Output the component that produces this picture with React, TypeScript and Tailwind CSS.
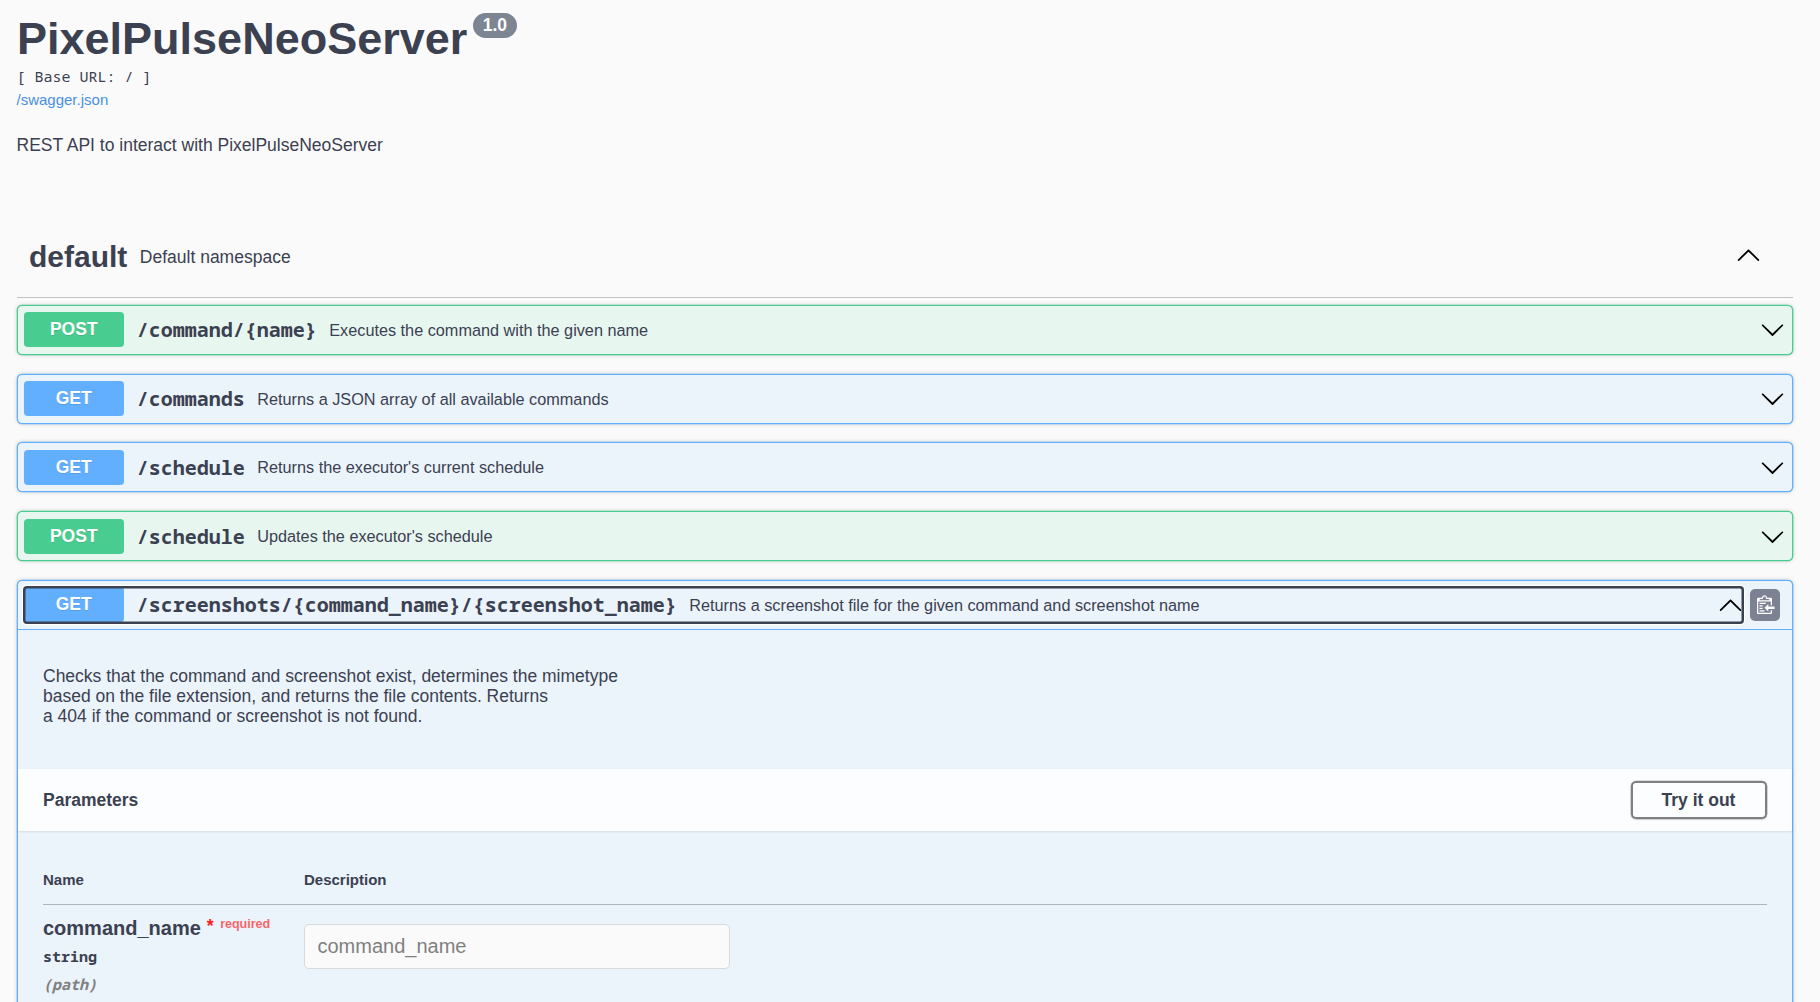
import React from "react";

const ARROW_DOWN =
  "M17.418 6.109c.272-.268.709-.268.979 0s.271.701 0 .969l-7.908 7.83c-.27.268-.707.268-.979 0l-7.908-7.83c-.27-.268-.27-.701 0-.969s.709-.268.979 0L10 13.25z";
const ARROW_UP =
  "M17.418 14.908c.272.268.709.268.979 0s.271-.701 0-.969l-7.908-7.83c-.27-.268-.707-.268-.979 0l-7.908 7.83c-.27.268-.27.701 0 .969s.709.268.979 0L10 7.767z";

const MONO = "font-['Noto_Sans_Mono','DejaVu_Sans_Mono',monospace]";

function Arrow({ up = false }: { up?: boolean }) {
  return (
    <svg className="size-[25px] shrink-0 text-black" viewBox="0 0 20 20" fill="currentColor">
      <path d={up ? ARROW_UP : ARROW_DOWN} />
    </svg>
  );
}

type Method = "GET" | "POST";

const TONES: Record<Method, { block: string; badge: string }> = {
  GET: {
    block: "border-[#61affe] bg-[#ebf3fb] shadow-[0_0_0_0.3px_#61affe,0_0_4px_rgba(0,0,0,0.19)]",
    badge: "bg-[#61affe]",
  },
  POST: {
    block: "border-[#49cc90] bg-[#e8f6f0] shadow-[0_0_0_0.3px_#49cc90,0_0_4px_rgba(0,0,0,0.19)]",
    badge: "bg-[#49cc90]",
  },
};

function Summary({ method, path, text }: { method: Method; path: string; text: string }) {
  return (
    <>
      <span
        className={`h-[35px] w-[100px] shrink-0 rounded-[3.75px] text-center text-[17.5px] leading-[35.5px] font-bold text-white [text-shadow:0_1px_0_rgba(0,0,0,0.1)] ${TONES[method].badge}`}
      >
        {method}
      </span>
      <span className={`ml-[13px] text-[20px] leading-[25px] font-bold whitespace-nowrap ${MONO}`}>{path}</span>
      <span className="ml-[12.5px] grow pt-px text-[16.25px] leading-[25px]">{text}</span>
    </>
  );
}

const OPERATIONS: { method: Method; path: string; text: string }[] = [
  { method: "POST", path: "/command/{name}", text: "Executes the command with the given name" },
  { method: "GET", path: "/commands", text: "Returns a JSON array of all available commands" },
  { method: "GET", path: "/schedule", text: "Returns the executor's current schedule" },
  { method: "POST", path: "/schedule", text: "Updates the executor's schedule" },
];

export default function App() {
  return (
    <div className="h-[1002px] overflow-hidden bg-[#fafafa] pr-[27px] pl-[16.5px] font-['Liberation_Sans',Arial,sans-serif] text-[#3b4151]">
      <header className="h-[222px]">
        <div className="flex items-start pt-[13px] pl-[0.5px]">
          <h1 className="pt-px text-[45px] leading-[50px] font-bold">PixelPulseNeoServer</h1>
          <span className="ml-[5.5px] h-[25px] rounded-full bg-[#7d8492] px-[10px] text-[17.5px] leading-[25px] font-bold text-white">
            1.0
          </span>
        </div>
        <pre className={`mt-[2px] text-[15px] leading-[20px] ${MONO}`}>[ Base URL: / ]</pre>
        <a className="mt-[4px] block text-[15px] leading-[20px] text-[#4990e2]">/swagger.json</a>
        <p className="mt-[25px] text-[17.5px] leading-[20px]">REST API to interact with PixelPulseNeoServer</p>
      </header>

      <div className="flex h-[76px] items-center border-b border-[rgba(59,65,81,0.3)] pr-[32.5px] pb-[6px] pl-[12.5px]">
        <h2 className="text-[30px] leading-[34px] font-bold">default</h2>
        <span className="ml-[12.5px] grow text-[17.5px] leading-[24px]">Default namespace</span>
        <div className="-mt-1">
          <Arrow up />
        </div>
      </div>

      <main className="mt-[6.75px] flex flex-col gap-[18.75px]">
        {OPERATIONS.map((op) => (
          <div
            key={op.method + op.path}
            className={`flex h-[50px] items-center rounded-[5px] border pr-[7px] pl-[6.25px] ${TONES[op.method].block}`}
          >
            <Summary {...op} />
            <Arrow />
          </div>
        ))}

        <section className={`h-[460px] rounded-[5px] border ${TONES.GET.block}`}>
          <div className="flex h-[49.5px] items-center border-b border-[#61affe] pl-[6.25px]">
            <div className="relative -mt-[0.5px] flex h-[35px] w-[1719px] items-center after:pointer-events-none after:absolute after:-inset-y-[1.5px] after:-right-[1.5px] after:-left-[0.75px] after:rounded-[4px] after:shadow-[inset_0_0_0_2.5px_#3b4151,0_0_0_1.25px_#fff]">
              <Summary
                method="GET"
                path="/screenshots/{command_name}/{screenshot_name}"
                text="Returns a screenshot file for the given command and screenshot name"
              />
              <Arrow up />
            </div>
            <div className="ml-[7px] flex h-[32px] w-[30.5px] items-center justify-center rounded-[5px] bg-[#7d8293]">
              <svg className="mb-[2px] ml-[3px] h-[20px] w-[18.75px]" viewBox="0 0 15 16" fill="#fff" fillRule="evenodd">
                <path d="M2 13h4v1H2v-1zm5-6H2v1h5V7zm2 3V8l-3 3 3 3v-2h5v-2H9zM4.5 9H2v1h2.5V9zM2 12h2.5v-1H2v1zm9 1h1v2c-.02.28-.11.52-.3.7-.19.18-.42.28-.7.3H1c-.55 0-1-.45-1-1V4c0-.55.45-1 1-1h3c0-1.11.89-2 2-2 1.11 0 2 .89 2 2h3c.55 0 1 .45 1 1v5h-1V6H1v9h10v-2zM2 5h8c0-.55-.45-1-1-1H8c-.55 0-1-.45-1-1s-.45-1-1-1-1 .45-1 1-.45 1-1 1H3c-.55 0-1 .45-1 1z" />
              </svg>
            </div>
          </div>

          <div className="h-[138.5px] px-[25.5px] pt-[36px] text-[17.5px] leading-[20px]">
            <p>Checks that the command and screenshot exist, determines the mimetype</p>
            <p>based on the file extension, and returns the file contents. Returns</p>
            <p>a 404 if the command or screenshot is not found.</p>
          </div>

          <div className="flex h-[62.5px] items-center justify-between bg-white/80 px-[25.5px] shadow-[0_1px_2px_rgba(0,0,0,0.1)]">
            <h4 className="text-[17.5px] leading-[20px] font-bold">Parameters</h4>
            <button className="h-[37.5px] w-[136px] rounded-[5px] border-2 border-[#808080] text-[17.5px] font-bold shadow-[0_0_0_0.3px_#808080,0_1px_2px_rgba(0,0,0,0.1)]">
              Try it out
            </button>
          </div>

          <div className="px-[25.5px] pt-[39px]">
            <div className="flex h-[34.5px] border-b border-[rgba(59,65,81,0.35)] text-[15px] leading-[20px] font-bold">
              <span className="w-[261px]">Name</span>
              <span>Description</span>
            </div>
            <div className="flex">
              <div className="w-[261px] pt-[11px]">
                <div className="flex">
                  <span className="text-[20px] leading-[24px] font-bold">command_name</span>
                  <span className="ml-[6px] text-[17.5px] leading-[20px] font-bold text-[#ff0000]/90">*</span>
                  <span className="ml-[6.5px] pt-px text-[12.5px] leading-[15px] font-bold text-[#ff0000]/60">
                    required
                  </span>
                </div>
                <div className={`mt-[6.5px] text-[15px] leading-[20px] font-bold ${MONO}`}>string</div>
                <div className={`mt-[7.5px] text-[15px] leading-[20px] font-bold text-[#808080] italic ${MONO}`}>(path)</div>
              </div>
              <input
                className="mt-[19.5px] h-[44.5px] w-[425.5px] rounded-[5px] border border-[#d9d9d9] bg-[#fafafa] px-[12.5px] text-[20px] placeholder:text-[#808080]"
                placeholder="command_name"
                readOnly
              />
            </div>
          </div>
        </section>
      </main>
    </div>
  );
}
